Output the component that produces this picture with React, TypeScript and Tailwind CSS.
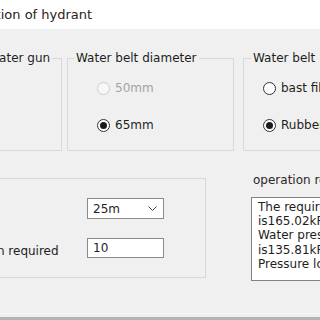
import React from "react";

type RadioProps = {
  label: string;
  checked?: boolean;
  disabled?: boolean;
};

const Radio = ({ label, checked = false, disabled = false }: RadioProps) => {
  return (
    <div className="flex h-[16px] items-center gap-[5px] whitespace-nowrap">
      <span
        className={
          disabled
            ? "flex size-[13px] items-center justify-center rounded-full border border-[#cccccc] bg-[#f7f7f7]"
            : "flex size-[13px] items-center justify-center rounded-full border border-[#333333] bg-white"
        }
      >
        {checked && <span className="size-[7px] rounded-full bg-[#1b1b1b]" />}
      </span>
      <span className={disabled ? "text-[#a3a3a3]" : "text-[#1e1e1e]"}>{label}</span>
    </div>
  );
};

export default function App() {
  return (
    <div className="flex h-[320px] w-[320px] flex-col overflow-hidden bg-[#f0f0f0] font-['DejaVu_Sans',sans-serif] text-[12px] leading-[16px] text-[#1e1e1e]">
      {/* title bar */}
      <div className="flex h-[29px] shrink-0 items-center bg-white">
        <span className="ml-[-52px] whitespace-nowrap text-[13px] text-[#2d2020]">
          Calculation of hydrant
        </span>
      </div>

      {/* option groups */}
      <div className="mt-[22px] flex shrink-0">
        <fieldset className="ml-[-20px] h-[100px] w-[82px] shrink-0 border border-[#d9d9d9]">
          <legend className="ml-[5px] px-[2px] leading-[14px] whitespace-nowrap">Water gun</legend>
        </fieldset>

        <fieldset className="ml-[5px] h-[100px] w-[167px] shrink-0 border border-[#d9d9d9]">
          <legend className="ml-[6px] px-[2px] leading-[14px] whitespace-nowrap">
            Water belt diameter
          </legend>
          <div className="flex flex-col gap-[21px] pt-[15px] pl-[29px]">
            <Radio label="50mm" disabled />
            <Radio label="65mm" checked />
          </div>
        </fieldset>

        <fieldset className="ml-[9px] h-[100px] w-[120px] shrink-0 border border-[#d9d9d9]">
          <legend className="ml-[7px] px-[2px] leading-[14px] whitespace-nowrap">
            Water belt material
          </legend>
          <div className="flex flex-col gap-[21px] pt-[15px] pl-[19px]">
            <Radio label="bast fiber" />
            <Radio label="Rubber lined" checked />
          </div>
        </fieldset>
      </div>

      {/* inputs and result */}
      <div className="mt-[21px] flex shrink-0 items-start">
        <div className="mt-[6px] ml-[-112px] h-[100px] w-[318px] shrink-0 border border-[#d9d9d9] pt-[19px] pl-[9px]">
          <div className="flex items-center">
            <span className="w-[162px] shrink-0 whitespace-nowrap">Belt length</span>
            <div className="ml-[27px] flex h-[21px] w-[77px] items-center justify-between border border-[#8a8a8a] bg-white pr-[6px] pl-[5px]">
              <span>25m</span>
              <svg width="9" height="5" viewBox="0 0 9 5" fill="none">
                <path d="M0.5 0.5 L4.5 4.5 L8.5 0.5" stroke="#444" strokeWidth="1" />
              </svg>
            </div>
          </div>
          <div className="mt-[18px] flex items-center">
            <span className="w-[162px] shrink-0 whitespace-nowrap pt-[6px]">Full water column required</span>
            <div className="ml-[27px] flex h-[20px] w-[77px] items-center border border-[#8a8a8a] bg-white pl-[5px]">
              10
            </div>
          </div>
        </div>

        <div className="ml-[45px] flex shrink-0 flex-col">
          <span className="ml-[2px] whitespace-nowrap text-[#2d2626]">operation result</span>
          <div className="mt-[9px] h-[84px] w-[130px] overflow-hidden border border-[#828282] bg-white px-[6px] pt-[2px] leading-[14.2px] whitespace-pre">
            {"The required hydrant pressure\nis165.02kPa\nWater pressure at gun outlet\nis135.81kPa\nPressure loss of water belt"}
          </div>
        </div>
      </div>

      {/* window bottom edge */}
      <div className="mt-auto flex flex-col">
        <div className="h-[1px] bg-[#f8f8f8]" />
        <div className="h-[3px]" />
        <div className="h-[3px] bg-[#b4b4b4]" />
      </div>
    </div>
  );
}
